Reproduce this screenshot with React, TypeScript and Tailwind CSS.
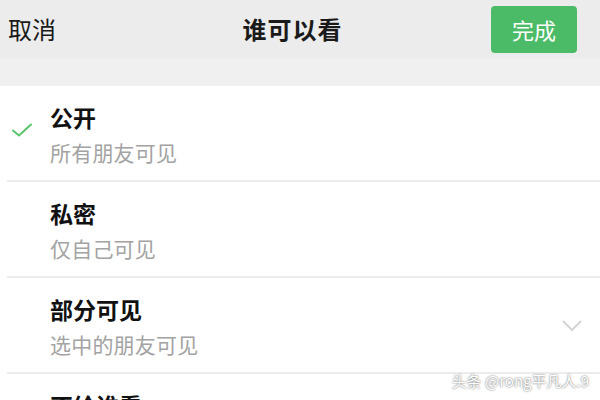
const font = { fontFamily: '"Noto Sans CJK SC", "Noto Sans", sans-serif' };

type Option = {
  title: string;
  desc: string;
  checked?: boolean;
  expandable?: boolean;
};

const options: Option[] = [
  { title: "公开", desc: "所有朋友可见", checked: true },
  { title: "私密", desc: "仅自己可见" },
  { title: "部分可见", desc: "选中的朋友可见", expandable: true },
  { title: "不给谁看", desc: "选中的朋友不可见", expandable: true },
];

function Check() {
  return (
    <svg width="20" height="14" viewBox="0 0 20 14" fill="none">
      <path d="M1 7.5 L7 12.5 L19 1.5" stroke="#5cc46b" strokeWidth="2" strokeLinecap="round" strokeLinejoin="round" />
    </svg>
  );
}

function Chevron() {
  return (
    <svg width="20" height="12" viewBox="0 0 20 12" fill="none">
      <path d="M1.5 1.5 L10 10 L18.5 1.5" stroke="#d4d4d4" strokeWidth="2" strokeLinecap="round" strokeLinejoin="round" />
    </svg>
  );
}

function Row({ opt }: { opt: Option }) {
  return (
    <div className="ml-[7px] h-[96px] shrink-0 border-b-2 border-[#ececec] relative flex">
      <div className="w-[43px] shrink-0 flex items-start pt-[37px] pl-[5px]">
        {opt.checked ? <Check /> : null}
      </div>
      <div className="flex-1 flex flex-col pt-[17px]">
        <div className="text-[23px] leading-[28px] font-bold text-[#111]">{opt.title}</div>
        <div className="mt-[8px] text-[21px] leading-[26px] text-[#a3a3a3] tracking-[0.2px]">{opt.desc}</div>
      </div>
      <div className="w-[38px] shrink-0 pt-[42px]">
        {opt.expandable ? <Chevron /> : null}
      </div>
    </div>
  );
}

export default function App() {
  return (
    <div className="w-[600px] h-[400px] overflow-hidden bg-white relative flex flex-col" style={font}>
      <div className="h-[58px] shrink-0 bg-[#ececec] flex items-center justify-between pl-[8px] pr-[23px]">
        <span className="text-[24px] leading-none text-[#1a1a1a] w-[86px]">取消</span>
        <span className="text-[24px] leading-none font-bold text-[#1a1a1a] tracking-[1px]">谁可以看</span>
        <button className="w-[86px] h-[47px] rounded-[4px] bg-[#4cbb67] text-white text-[22px] leading-none">
          完成
        </button>
      </div>
      <div className="h-[28px] shrink-0 bg-[#f0f0f0]" />
      {options.map((o) => (
        <Row key={o.title} opt={o} />
      ))}
      <div
        className="absolute right-[11px] top-[371px] text-[15px] leading-[20px] text-white"
        style={{ textShadow: "0 0 2px rgba(0,0,0,0.7)" }}
      >
        头条 @rong平凡人.9
      </div>
    </div>
  );
}
